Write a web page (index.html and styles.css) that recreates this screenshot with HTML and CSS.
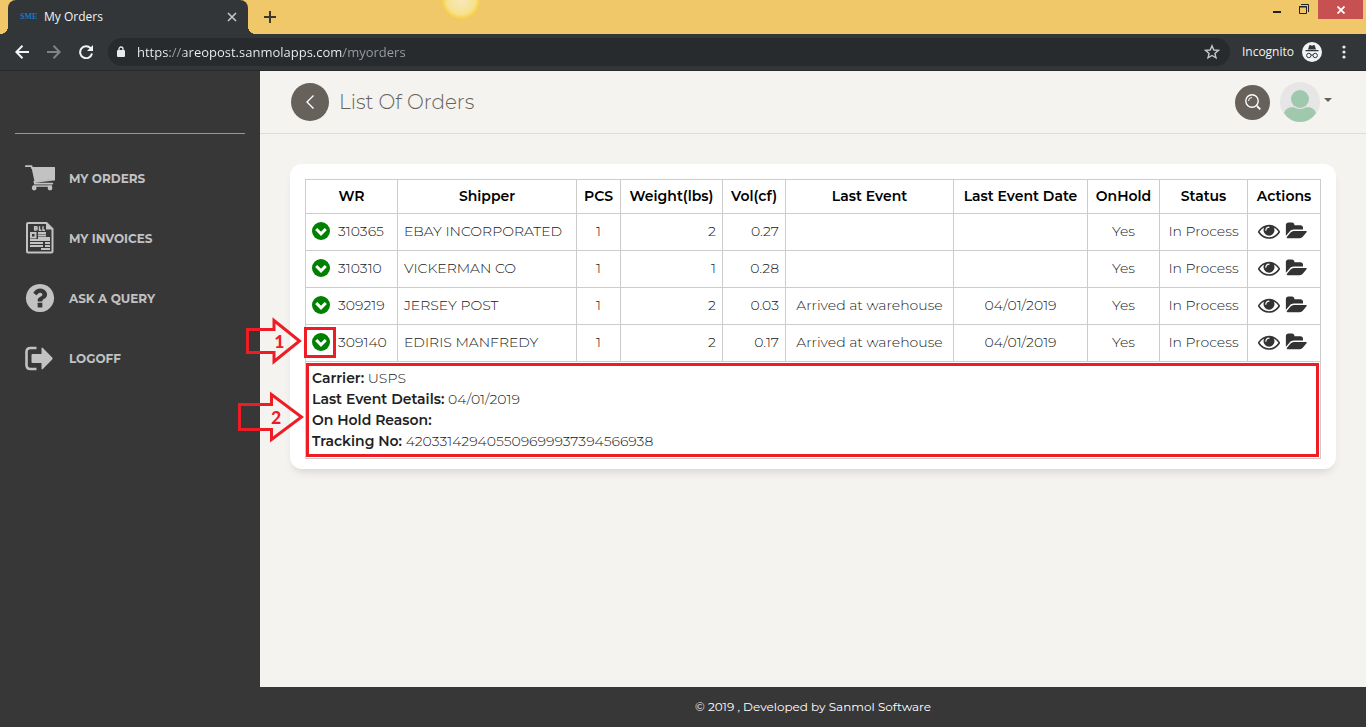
FILE: index.html
```html
<!DOCTYPE html>
<html lang="en">
<head>
<meta charset="utf-8">
<meta name="viewport" content="width=device-width, initial-scale=1">
<title>My Orders</title>
<link rel="stylesheet" href="styles.css">
</head>
<body>
<svg class="sprite" aria-hidden="true">
  <symbol id="i-down" viewBox="0 0 18 18"><circle cx="9" cy="9" r="9" fill="#008000"/><path d="M4.200 7l4.800 4.800L13.800 7" fill="none" stroke="#fff" stroke-width="3"/></symbol>
  <symbol id="i-eye" viewBox="0 0 1792 1792"><path d="M1664 960q-152-236-381-353 61 104 61 225 0 185-131.5 316.5t-316.5 131.5-316.5-131.5-131.5-316.5q0-121 61-225-229 117-381 353 133 205 333.5 326.5t434.5 121.5 434.5-121.5 333.5-326.5zm-720-384q0-20-14-34t-34-14q-125 0-214.5 89.5t-89.5 214.5q0 20 14 34t34 14 34-14 14-34q0-86 61-147t147-61q20 0 34-14t14-34zm848 384q0 34-20 69-140 230-376.5 368.5t-499.5 138.5-499.5-139-376.5-368q-20-35-20-69t20-69q140-229 376.5-368t499.5-139 499.5 139 376.5 368q20 35 20 69z"/></symbol>
  <symbol id="i-folder" viewBox="0 0 1943 1792"><path d="M1943 952q0 31-31 66l-336 396q-43 51-120.5 86.5t-143.5 35.500h-1088q-34 0-60.500-13t-26.500-43q0-31 31-66l336-396q43-51 120.500-86.500t143.500-35.500h1088q34 0 60.500 13t26.500 43zm-343-344v160h-832q-94 0-197 47.500t-164 119.500l-337 396-5 6q0-4-.5-12.500t-.5-12.500v-960q0-92 66-158t158-66h320q92 0 158 66t66 158v32h544q92 0 158 66t66 158z"/></symbol>
</svg>

<header class="browser">
  <div class="tabstrip">
    <div class="tab">
      <span class="favicon">SME</span>
      <span class="tab-title">My Orders</span>
      <button class="chrome-btn tab-close" aria-label="Close tab"><svg width="10" height="10" viewBox="0 0 10 10"><path d="M1 1l8 8M9 1L1 9" stroke="#c6c9cc" stroke-width="1.600"/></svg></button>
    </div>
    <button class="chrome-btn new-tab" aria-label="New tab"><svg width="12" height="12" viewBox="0 0 12 12"><path d="M6 0v12M0 6h12" stroke="#3b3830" stroke-width="2"/></svg></button>
    <span class="sun"></span>
    <div class="window-controls">
      <button class="chrome-btn win-min" aria-label="Minimize"><svg width="8" height="2"><path d="M0 1h8" stroke="#222" stroke-width="2"/></svg></button>
      <button class="chrome-btn win-restore" aria-label="Restore"><svg width="10" height="10" viewBox="0 0 10 10"><path d="M.5 3v6.500h7v-7h-7zM0 3h8M2 .5h7.500V8" fill="none" stroke="#222"/></svg></button>
      <button class="chrome-btn win-close" aria-label="Close"><svg width="8" height="8" viewBox="0 0 8 8"><path d="M.5.5l7 7M7.500.5l-7 7" stroke="#fff" stroke-width="1.800"/></svg></button>
    </div>
  </div>
  <div class="toolbar">
    <button class="chrome-btn nav-btn" aria-label="Back"><svg width="14" height="14" viewBox="0 0 14 14"><path d="M14 7H1.500M7.500.8L1.300 7l6.200 6.200" fill="none" stroke="#f1f3f4" stroke-width="2"/></svg></button>
    <button class="chrome-btn nav-btn" aria-label="Forward"><svg width="14" height="14" viewBox="0 0 14 14"><path d="M0 7h12.500M6.500.8L12.700 7l-6.200 6.200" fill="none" stroke="#808386" stroke-width="2"/></svg></button>
    <button class="chrome-btn nav-btn" aria-label="Reload"><svg width="14" height="14" viewBox="0 0 14 14"><path d="M11.600 3.200A6 6 0 1 0 13 8.600" fill="none" stroke="#f1f3f4" stroke-width="2"/><path d="M14 0v6H8z" fill="#f1f3f4"/></svg></button>
    <div class="omnibox">
      <svg width="8" height="12" viewBox="0 0 8 12"><path d="M2 5V3a2 2 0 0 1 4 0v2" fill="none" stroke="#e8eaed" stroke-width="1.300"/><rect y="4" width="8" height="7" rx="1" fill="#e8eaed"/></svg>
      <input class="url" type="text" aria-label="Address" value="https://areopost.sanmolapps.com/myorders">
      <button class="chrome-btn" aria-label="Bookmark this page"><svg width="16" height="16" viewBox="0 0 16 16"><path d="M8 1.800l1.800 4.200 4.600.4-3.500 3 1.100 4.500L8 11.500l-4 2.400 1.100-4.500-3.500-3L6.200 6z" fill="none" stroke="#c4c7ca" stroke-width="1.400"/></svg></button>
    </div>
    <span class="incognito">Incognito</span>
    <svg class="spy" width="20" height="20" viewBox="0 0 20 20"><circle cx="10" cy="10" r="10" fill="#f1f3f4"/><path d="M7.200 3.500l.8-.4 2 .6 2-.6.800.4 1.200 4H6zM3.500 8h13v1.300h-13z" fill="#323639"/><g fill="none" stroke="#323639"><circle cx="6.800" cy="13.500" r="2.200"/><circle cx="13.200" cy="13.500" r="2.200"/><path d="M9 13.200q1-.7 2 0"/></g></svg>
    <button class="chrome-btn menu-btn" aria-label="Menu"><svg width="4" height="14" viewBox="0 0 4 14" fill="#e8eaed"><circle cx="2" cy="2" r="1.600"/><circle cx="2" cy="7" r="1.600"/><circle cx="2" cy="12" r="1.600"/></svg></button>
  </div>
</header>

<div class="app">
  <nav class="sidebar">
    <div class="brand"></div>
    <a class="nav-item" href="#orders">
      <svg class="nav-icon" viewBox="0 0 30 30" fill="#c2c2c2"><path d="M.8 3.200h5.700l.4 1.700h21.900q1 0 1 1v9.600q0 1-1 1.200L9.500 18.800l.4 1.800h17.400" fill="none" stroke="#c2c2c2" stroke-width="1.800" stroke-linecap="round"/><path d="M6.500 4.500h23v11.500L9.500 18.500z"/><path d="M8 22.300h19v1.500H8z"/><circle cx="9.200" cy="25" r="2.400"/><circle cx="25" cy="25" r="2.400"/></svg>
      <span>MY ORDERS</span></a>
    <a class="nav-item" href="#invoices">
      <svg class="nav-icon" viewBox="0 0 30 32"><path d="M3 1h18.500l6 6v22.500q0 1-1 1H3q-1 0-1-1V2q0-1 1-1z" fill="none" stroke="#c2c2c2" stroke-width="2"/><path d="M21 1v6.500h7z" fill="#c2c2c2"/><path d="M9.600 4.300v4M12 4.300v4M14.500 4.300v4h2M18 4.300v4h2M9 4.600h2.500M9 6.300h2.500M9 8h2.500" fill="none" stroke="#c2c2c2" stroke-width="1.400"/><path d="M6 11h4.500v4.500H6z" fill="none" stroke="#c2c2c2" stroke-width="2"/><path d="M13 11h8M13 13.500h8M13 16h12M5 18h20M5 21h13M20 21h5M5 24h13M20 24h5M16 27h9" stroke="#c2c2c2" stroke-width="1.800"/></svg>
      <span>MY INVOICES</span></a>
    <a class="nav-item" href="#query">
      <svg class="nav-icon" viewBox="80 80 1632 1632" fill="#c2c2c2"><path d="M1024 1376v-192q0-14-9-23t-23-9h-192q-14 0-23 9t-9 23v192q0 14 9 23t23 9h192q14 0 23-9t9-23zm256-672q0-88-55.5-163t-138.5-116-170-41q-243 0-371 213-15 24 8 42l132 100q7 6 19 6 16 0 25-12 53-68 86-92 34-24 86-24 48 0 85.5 26t37.5 59q0 38-20 61t-68 45q-63 28-115.5 86.5t-52.5 125.5v36q0 14 9 23t23 9h192q14 0 23-9t9-23q0-19 21.5-49.5t54.5-49.5q32-18 49-28.5t46-35 44.5-48 28-60.5 12.5-81zm384 192q0 209-103 385.5t-279.5 279.5-385.5 103-385.5-103-279.5-279.5-103-385.5 103-385.5 279.5-279.5 385.5-103 385.5 103 279.5 279.5 103 385.5z"/></svg>
      <span>ASK A QUERY</span></a>
    <a class="nav-item" href="#logoff">
      <svg class="nav-icon" viewBox="0 0 30 30"><path d="M11.500 5H5.500q-4 0-4 4v13q0 4 4 4h6" fill="none" stroke="#c2c2c2" stroke-width="2.600"/><path d="M7.500 11h9V5.500q0-1.600 1.400-.6l9.300 9.600q1 1 0 2l-9.300 9.600q-1.400 1-1.400-.6V20h-9q-1 0-1-1v-7q0-1 1-1z" fill="#c2c2c2"/></svg>
      <span>LOGOFF</span></a>
  </nav>

  <div class="content">
    <header class="page-header">
      <button class="round-btn back" aria-label="Back"><svg width="10" height="16" viewBox="0 0 10 16"><path d="M8.500 1.500L2 8l6.500 6.500" fill="none" stroke="#fff" stroke-width="1.400"/></svg></button>
      <h1>List Of Orders</h1>
      <button class="round-btn search" aria-label="Search"><svg width="16" height="16" viewBox="0 0 16 16" fill="none" stroke="#fff"><circle cx="7" cy="7" r="6.200" stroke-width="1.400"/><path d="M3.500 7A3.500 3.500 0 0 1 7 3.500"/><path d="M12 12l3.300 3.300" stroke-width="1.800"/></svg></button>
      <button class="account" aria-label="Account">
        <svg width="40" height="40" viewBox="0 0 40 40"><circle cx="20" cy="20" r="20" fill="#e6e6e6"/><circle cx="20" cy="17" r="9" fill="#9fc8ad"/><path d="M4 31q2-6 9-6 7 4 14 0 7 0 9 6-6 9-16 9T4 31z" fill="#9fc8ad"/></svg>
        <span class="caret"></span>
      </button>
    </header>

    <main class="main">
      <section class="card">
        <table class="orders">
          <colgroup><col class="c-wr"><col class="c-shipper"><col class="c-pcs"><col class="c-weight"><col class="c-vol"><col class="c-event"><col class="c-date"><col class="c-hold"><col class="c-status"><col class="c-actions"></colgroup>
          <thead>
            <tr><th>WR</th><th>Shipper</th><th>PCS</th><th>Weight(lbs)</th><th>Vol(cf)</th><th>Last Event</th><th>Last Event Date</th><th>OnHold</th><th>Status</th><th>Actions</th></tr>
          </thead>
          <tbody>
            <tr>
              <td><div class="wr"><button class="icon-btn" aria-label="Expand"><svg class="i-down"><use href="#i-down"/></svg></button>310365</div></td>
              <td>EBAY INCORPORATED</td><td class="mid">1</td><td class="num">2</td><td class="num">0.27</td><td class="mid"></td><td class="mid"></td><td class="mid">Yes</td><td class="mid">In Process</td>
              <td><div class="actions"><button class="icon-btn" aria-label="View"><svg class="i-eye"><use href="#i-eye"/></svg></button><button class="icon-btn" aria-label="Open files"><svg class="i-folder"><use href="#i-folder"/></svg></button></div></td>
            </tr>
            <tr>
              <td><div class="wr"><button class="icon-btn" aria-label="Expand"><svg class="i-down"><use href="#i-down"/></svg></button>310310</div></td>
              <td>VICKERMAN CO</td><td class="mid">1</td><td class="num">1</td><td class="num">0.28</td><td class="mid"></td><td class="mid"></td><td class="mid">Yes</td><td class="mid">In Process</td>
              <td><div class="actions"><button class="icon-btn" aria-label="View"><svg class="i-eye"><use href="#i-eye"/></svg></button><button class="icon-btn" aria-label="Open files"><svg class="i-folder"><use href="#i-folder"/></svg></button></div></td>
            </tr>
            <tr>
              <td><div class="wr"><button class="icon-btn" aria-label="Expand"><svg class="i-down"><use href="#i-down"/></svg></button>309219</div></td>
              <td>JERSEY POST</td><td class="mid">1</td><td class="num">2</td><td class="num">0.03</td><td class="mid">Arrived at warehouse</td><td class="mid">04/01/2019</td><td class="mid">Yes</td><td class="mid">In Process</td>
              <td><div class="actions"><button class="icon-btn" aria-label="View"><svg class="i-eye"><use href="#i-eye"/></svg></button><button class="icon-btn" aria-label="Open files"><svg class="i-folder"><use href="#i-folder"/></svg></button></div></td>
            </tr>
            <tr>
              <td class="marked">
                <div class="wr"><button class="icon-btn" aria-label="Collapse"><svg class="i-down"><use href="#i-down"/></svg></button>309140</div>
                <span class="frame frame-toggle"></span>
                <span class="callout callout-1"><svg width="56" height="48" viewBox="0 0 56 48"><path d="M1.500 12.500h26.500V3.500L53.500 24 28 44.500v-9H1.500z" fill="none" stroke="#ee1c25" stroke-width="3"/></svg><b>1</b></span>
              </td>
              <td>EDIRIS MANFREDY</td><td class="mid">1</td><td class="num">2</td><td class="num">0.17</td><td class="mid">Arrived at warehouse</td><td class="mid">04/01/2019</td><td class="mid">Yes</td><td class="mid">In Process</td>
              <td><div class="actions"><button class="icon-btn" aria-label="View"><svg class="i-eye"><use href="#i-eye"/></svg></button><button class="icon-btn" aria-label="Open files"><svg class="i-folder"><use href="#i-folder"/></svg></button></div></td>
            </tr>
            <tr>
              <td class="marked details" colspan="10">
                <div><b>Carrier:</b> USPS</div>
                <div><b>Last Event Details:</b> 04/01/2019</div>
                <div><b>On Hold Reason:</b></div>
                <div><b>Tracking No:</b> 420331429405509699937394566938</div>
                <span class="frame frame-details"></span>
                <span class="callout callout-2"><svg width="66" height="52" viewBox="0 0 66 52"><path d="M1.500 13.500h32V3.500L63.500 26l-30 22.500v-10h-32z" fill="none" stroke="#ee1c25" stroke-width="3"/></svg><b>2</b></span>
              </td>
            </tr>
          </tbody>
        </table>
      </section>
    </main>
    <footer class="footer">© 2019 , Developed by Sanmol Software</footer>
  </div>
</div>
</body>
</html>
```
FILE: styles.css
```css
* { box-sizing: border-box; }

body {
  margin: 0;
  min-height: 100vh;
  display: flex;
  flex-direction: column;
  background: #f4f3ef;
  color: #212121;
  font: 300 14px/21px Montserrat, Inter, sans-serif;
}

button { font: inherit; color: inherit; cursor: pointer; }
svg { display: block; }
.sprite { position: absolute; width: 0; height: 0; }

/* Browser frame */
.browser { font: 400 12px/16px "Segoe UI", "Open Sans", sans-serif; color: #f1f3f4; }
.chrome-btn { display: flex; align-items: center; justify-content: center; padding: 0; border: 0; background: none; }
.tabstrip { position: relative; display: flex; height: 34px; padding-left: 8px; background: #f0c869; }
.tab {
  position: relative;
  display: flex;
  align-items: center;
  width: 240px;
  padding: 0 11px 0 12px;
  border-radius: 8px 8px 0 0;
  background: #323639;
}
.tab::before, .tab::after { content: ""; position: absolute; bottom: 0; width: 8px; height: 8px; }
.tab::before { right: 100%; background: radial-gradient(circle at 0 0, transparent 8px, #323639 8px); }
.tab::after { left: 100%; background: radial-gradient(circle at 100% 0, transparent 8px, #323639 8px); }
.favicon { width: 24px; font: 700 8px/16px "Liberation Serif", serif; color: #1778c2; }
.tab-title { flex: 1; }
.new-tab { width: 44px; }
.sun {
  position: absolute;
  left: 442px;
  top: -19px;
  width: 38px;
  height: 38px;
  border-radius: 50%;
  background: radial-gradient(circle closest-side, #f8e6b4 20%, #f7e28d 75%, #f5cf45 100%);
}
.window-controls { display: flex; align-items: flex-start; margin-left: auto; padding-right: 3px; }
.win-min { width: 26px; height: 24px; }
.win-restore { width: 28px; height: 18px; }
.win-close { width: 45px; height: 19px; background: #c75050; }

.toolbar { display: flex; align-items: center; height: 37px; padding: 0 20px 0 6px; background: #323639; border-bottom: 1px solid #28292b; }
.nav-btn { width: 32px; height: 32px; }
.omnibox { display: flex; align-items: center; flex: 1; height: 28px; margin-left: 6px; padding: 0 10px 0 9px; border-radius: 14px; background: #282b2e; }
.url {
  flex: 1;
  min-width: 0;
  margin-left: 12px;
  padding: 0;
  border: 0;
  outline: 0;
  color: #9aa0a6;
  font: 400 13px/20px "Segoe UI", "Open Sans", sans-serif;
}
/* Host in white, scheme separator and path in grey */
.url {
  background: linear-gradient(90deg, #f1f3f4 33px, #9aa0a6 33px 47px, #f1f3f4 47px 206px, #9aa0a6 206px);
  -webkit-background-clip: text;
  background-clip: text;
  -webkit-text-fill-color: transparent;
}
.incognito { margin: 0 8px 0 12px; }
.menu-btn { width: 4px; margin-left: 20px; }

/* Shell */
.app { display: flex; flex: 1; }
.sidebar { flex: none; width: 260px; background: #373737; }
.brand { height: 63px; margin: 0 15px 14px; border-bottom: 1px solid #989898; }
.nav-item {
  display: flex;
  align-items: center;
  gap: 14px;
  height: 60px;
  padding-left: 25px;
  color: #c2c2c2;
  font-size: 12px;
  font-weight: 700;
  text-decoration: none;
}
.nav-icon { width: 30px; height: 32px; }
.content { display: flex; flex: 1; flex-direction: column; min-width: 0; }

.page-header { display: flex; align-items: center; height: 63px; padding: 0 34px 0 31px; border-bottom: 1px solid #dddcd9; }
.page-header h1 { flex: 1; margin: 0 0 0 10px; color: #66615b; font-size: 20px; font-weight: 300; line-height: 30px; }
.round-btn { display: flex; align-items: center; justify-content: center; padding: 0; border: 0; border-radius: 50%; background: #66615b; }
.back { width: 38px; height: 38px; }
.search { width: 35px; height: 35px; }
.account { display: flex; align-items: center; gap: 4px; margin-left: 10px; padding: 0; border: 0; background: none; }
.caret { border: 4px solid transparent; border-top-color: #66615b; border-bottom: 0; margin-bottom: 4px; }

.main { flex: 1; padding: 30px; }
.card { padding: 15px 15px 10px; border-radius: 12px; background: #fff; box-shadow: 0 6px 10px -4px rgba(0, 0, 0, .15); }
.footer { height: 40px; background: #373737; color: #fff; font-size: 12px; font-weight: 400; line-height: 40px; text-align: center; }

/* Orders table */
.orders { width: 100%; border-collapse: collapse; table-layout: fixed; }
.orders th, .orders td { border: 1px solid #ccc; white-space: nowrap; }
.orders th { height: 34px; padding: 0; color: #000; font-weight: 600; }
.orders td { height: 37px; padding: 0 6px 2px; }
.orders .mid { text-align: center; }
.orders .num { text-align: right; }
.c-wr { width: 92px; }
.c-shipper { width: 179px; }
.c-pcs { width: 44px; }
.c-weight { width: 102px; }
.c-vol { width: 63px; }
.c-event { width: 168px; }
.c-date { width: 134px; }
.c-hold { width: 72px; }
.c-status { width: 88px; }
.c-actions { width: 73px; }
.wr { display: flex; align-items: center; gap: 8px; }
.actions { display: flex; align-items: center; gap: 5px; padding-left: 4px; }
.icon-btn { padding: 0; border: 0; background: none; }
.i-down { width: 18px; height: 18px; }
.i-eye { width: 22px; height: 22px; fill: #333; }
.i-folder { width: 22px; height: 20px; fill: #333; }
.orders .details { height: auto; padding: 6px; }
.details b { font-weight: 600; }

/* Red annotations over the table */
.marked { position: relative; }
.frame { position: absolute; border: 3px solid #ee1c25; pointer-events: none; }
.frame-toggle { left: -2px; top: 2px; width: 32px; height: 31px; }
.frame-details { inset: 1px 1px 1px 0; }
.callout { position: absolute; color: #ee1c25; font: 700 20px/24px Calibri, "Open Sans", sans-serif; pointer-events: none; }
.callout b { position: absolute; top: 50%; left: 50%; margin-top: -12px; font-weight: 700; }
.callout-1 { left: -60px; top: -8px; }
.callout-2 { left: -68px; top: 29px; }
```
